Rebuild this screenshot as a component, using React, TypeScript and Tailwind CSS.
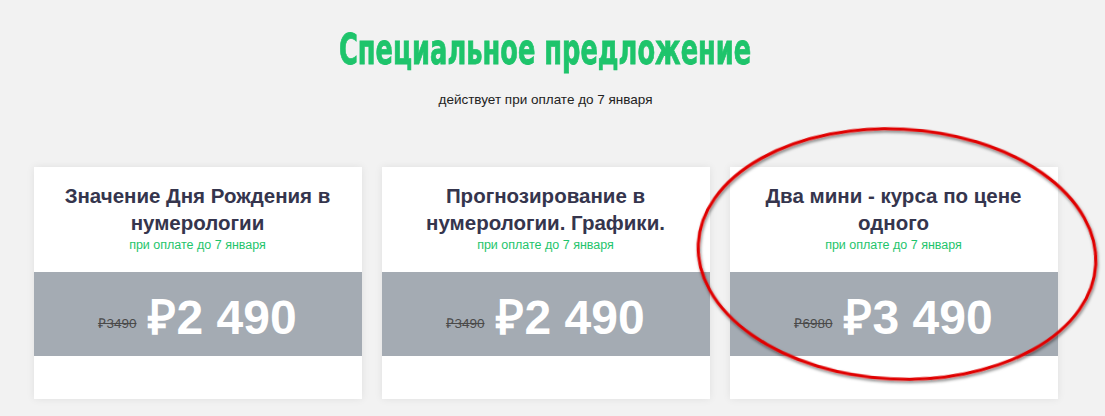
import React from "react";

const cards = [
  { title: ["Значение Дня Рождения в", "нумерологии"], old: "₽3490", price: "₽2 490" },
  { title: ["Прогнозирование в", "нумерологии. Графики."], old: "₽3490", price: "₽2 490" },
  { title: ["Два мини - курса по цене", "одного"], old: "₽6980", price: "₽3 490" },
];

export default function App() {
  return (
    <div className="relative w-[1105px] h-[416px] overflow-hidden bg-[#f2f2f2] font-['Liberation_Sans',Arial,sans-serif]">
      <div className="w-[1091px] flex flex-col items-center pt-[24px]">
        <h1 className="text-[42px] leading-[52px] font-bold text-[#1ec46b] whitespace-nowrap scale-x-[0.68] [-webkit-text-stroke:0.8px_#1ec46b] font-['DejaVu_Sans_Condensed','DejaVu_Sans',sans-serif]">
          Специальное предложение
        </h1>
        <p className="mt-[16px] text-[13.5px] leading-[16px] text-[#222]">действует при оплате до 7 января</p>
        <div className="mt-[59px] flex gap-[20px]">
          {cards.map((c, i) => (
            <div key={i} className="w-[328px] h-[232px] bg-white shadow-[0_0_8px_rgba(0,0,0,0.08)] flex flex-col">
              <div className="h-[105px] flex flex-col items-center pt-[15px]">
                <div className="text-[20.5px] leading-[27px] font-bold text-[#35354d] text-center">
                  {c.title[0]}
                  <br />
                  {c.title[1]}
                </div>
                <div className="text-[12.5px] leading-[16px] text-[#1ec46b] mt-[1px]">при оплате до 7 января</div>
              </div>
              <div className="h-[84px] bg-[#a4abb3] flex items-end justify-center pb-[22px] gap-[12px]">
                <span className="text-[13.5px] leading-[14px] text-[#4a4a4a] line-through mb-[3px]">{c.old}</span>
                <span className="text-[48px] leading-[45px] font-bold text-white mb-[-6px]">{c.price}</span>
              </div>
            </div>
          ))}
        </div>
      </div>
      <svg className="absolute left-0 top-0 pointer-events-none" width="1105" height="416">
        <defs>
          <filter id="sh" x="-10%" y="-10%" width="120%" height="120%">
            <feDropShadow dx="1" dy="2" stdDeviation="1.5" floodColor="#000" floodOpacity="0.5" />
          </filter>
        </defs>
        <ellipse cx="897" cy="254" rx="199" ry="125" transform="rotate(3 897 254)" fill="none" stroke="#e00000" strokeWidth="3" filter="url(#sh)" />
      </svg>
    </div>
  );
}
